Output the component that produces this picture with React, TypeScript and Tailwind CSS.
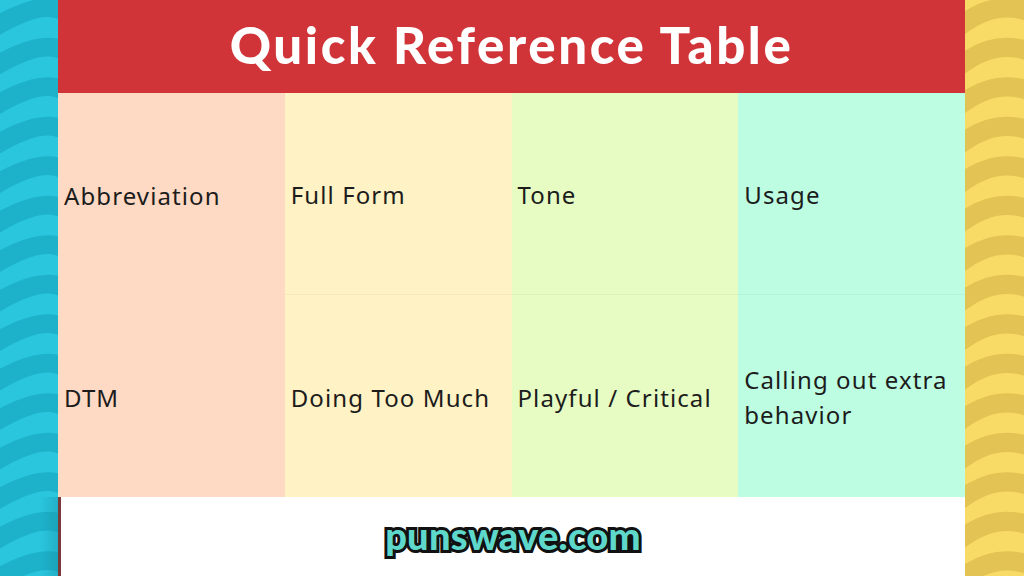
import React from "react";

function Waves({ base, dark, peak, width }: { base: string; dark: string; peak: number; width: number }) {
  const bands: React.ReactNode[] = [];
  for (let i = -1; i < 16; i++) {
    const y = i * 39.5 + 8;
    const d = `M -10 ${y + 22} Q ${peak} ${y - 12} ${width + 10} ${y + 6}`;
    bands.push(<path key={i} d={d} stroke={dark} strokeWidth={19} fill="none" />);
  }
  return (
    <svg width={width} height={576} viewBox={`0 0 ${width} 576`} className="block">
      <rect width={width} height={576} fill={base} />
      {bands}
    </svg>
  );
}

const font = { fontFamily: '"Noto Sans", "Open Sans", sans-serif' };

function Cell({ bg, children, border }: { bg: string; children: React.ReactNode; border?: boolean }) {
  return (
    <div
      className={`flex items-center pl-[6px] pr-1 pt-[2px] text-[24px] leading-[35px] tracking-[1.1px] text-[#1c1c1c] ${bg} ${border ? "border-b border-black/[0.04]" : ""}`}
      style={font}
    >
      <div>{children}</div>
    </div>
  );
}

export default function App() {
  return (
    <div className="flex h-[576px] w-[1024px] overflow-hidden bg-white">
      <div className="w-[58px] shrink-0 relative">
        <Waves base="#2ac6de" dark="#1db2ca" peak={45} width={58} />
        <div className="absolute left-[40px] top-[497px] h-[79px] w-[18px] bg-gradient-to-r from-transparent to-[#178fa3]/40" />
      </div>
      <div className="flex flex-1 flex-col">
        <div className="flex h-[93px] items-center justify-center bg-[#d13438] pb-[5px]">
          <h1
            className="text-[51px] font-black leading-none tracking-[2.6px] text-white"
            style={{ fontFamily: 'Lato, "Open Sans", sans-serif' }}
          >
            Quick Reference Table
          </h1>
        </div>
        <div className="grid h-[404px] grid-cols-4 grid-rows-2">
          <Cell bg="bg-[#fed9c3]">Abbreviation</Cell>
          <Cell bg="bg-[#fff2c4]" border>Full Form</Cell>
          <Cell bg="bg-[#e6fcc3]" border>Tone</Cell>
          <Cell bg="bg-[#bdfde2]" border>Usage</Cell>
          <Cell bg="bg-[#fed9c3]">DTM</Cell>
          <Cell bg="bg-[#fff2c4]">Doing Too Much</Cell>
          <Cell bg="bg-[#e6fcc3]">Playful / Critical</Cell>
          <Cell bg="bg-[#bdfde2]">
            Calling out extra
            <br />
            behavior
          </Cell>
        </div>
        <div className="flex flex-1 items-center justify-center border-l-[3px] border-[#7a3a3a] bg-white pb-[4px]">
          <span
            className="text-[38px] font-black leading-none tracking-[0.3px] text-[#5fd8cc] [-webkit-text-stroke:6px_#111] [paint-order:stroke_fill]"
            style={{ fontFamily: 'Lato, "Open Sans", sans-serif' }}
          >
            punswave.com
          </span>
        </div>
      </div>
      <div className="w-[59px] shrink-0">
        <Waves base="#f8da66" dark="#e2c353" peak={30} width={59} />
      </div>
    </div>
  );
}
